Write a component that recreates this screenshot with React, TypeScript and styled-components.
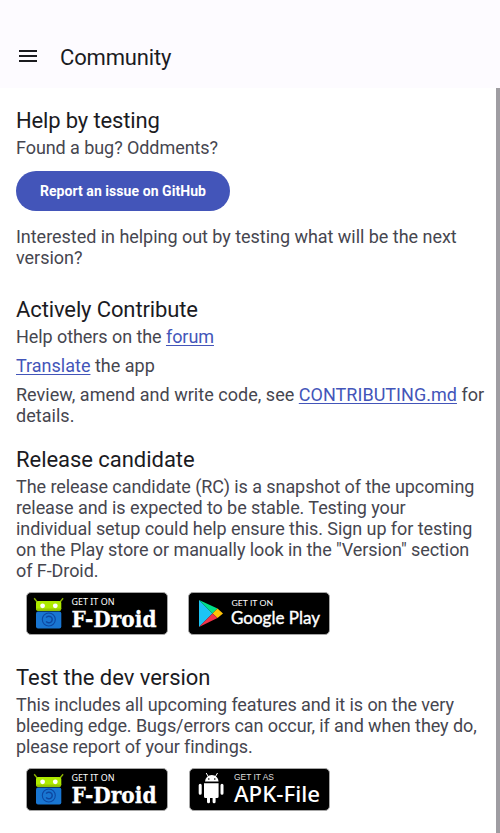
import React from 'react';
import styled, { createGlobalStyle } from 'styled-components';

const GlobalStyle = createGlobalStyle`
  * { box-sizing: border-box; }
  body { margin: 0; background: #fff; font-family: Roboto, sans-serif; }
`;

const Page = styled.div`
  display: flex;
  flex-direction: column;
  height: 833px;
  overflow: hidden;
`;

const TopBar = styled.header`
  display: flex;
  align-items: center;
  flex: 0 0 88px;
  padding: 27px 16px 0;
  gap: 20px;
  background: #fdfbff;
`;

const MenuButton = styled.button`
  display: flex;
  padding: 0 0 3px;
  border: 0;
  background: none;
`;

const Title = styled.h1`
  margin: 0;
  font-size: 22px;
  line-height: 26px;
  font-weight: 400;
  letter-spacing: -0.17px;
  color: #1b1b1f;
`;

const Body = styled.div`
  display: flex;
  flex: 1;
  min-height: 0;
`;

const Content = styled.main`
  flex: 1;
  min-width: 0;
  padding: 20px 0 0 16px;
`;

const Scrollbar = styled.div`
  flex: 0 0 4px;
  background: #9f9da2;
`;

const Section = styled.section<{ $gap?: number }>`
  margin-bottom: ${(p) => p.$gap ?? 0}px;
`;

const Heading = styled.h2<{ $tracking?: number }>`
  margin: 0 0 3px;
  font-size: 22px;
  line-height: 26px;
  font-weight: 400;
  letter-spacing: ${(p) => p.$tracking ?? -0.04}px;
  color: #1b1b1f;
`;

const Text = styled.p<{ $gap?: number; $tracking?: number }>`
  margin: 0 0 ${(p) => p.$gap ?? 0}px;
  font-size: 18px;
  line-height: 21px;
  font-weight: 400;
  letter-spacing: ${(p) => p.$tracking ?? -0.07}px;
  color: #46464f;
  white-space: nowrap;
`;

const Link = styled.a`
  color: #4355b9;
  text-decoration: underline;
  text-decoration-thickness: 1px;
  text-decoration-skip-ink: none;
  text-underline-offset: 2px;
`;

const PrimaryButton = styled.button`
  display: block;
  width: 214px;
  height: 40px;
  margin: 0 0 15px;
  padding: 0;
  border: 0;
  border-radius: 20px;
  background: #4355b9;
  color: #fff;
  font: 700 14px Roboto, sans-serif;
  letter-spacing: 0.06px;
`;

const Badges = styled.div`
  display: flex;
  gap: 20px;
  padding-left: 10px;
`;

const BadgeSvg = styled.svg`
  display: block;
  width: 142px;
  height: 43px;
`;

function Badge({ children, inset = 0 }: { children: React.ReactNode; inset?: number }) {
  return (
    <BadgeSvg viewBox="0 0 142 43">
      <rect x={0.5 + inset} y=".5" width={141 - inset} height="42" rx="4.5" fill="#000" stroke="#a6a6a6" />
      {children}
    </BadgeSvg>
  );
}

function FDroidBadge() {
  return (
    <Badge>
      <path d="M8.2 6.3l3.4 4.2M37.1 6.3l-3.4 4.2" stroke="#8ab000" strokeWidth="1.4" />
      <rect x="10" y="9" width="25.3" height="9.8" rx="2" fill="#aeea00" />
      <path d="M10 16.5h25.3v.3a2 2 0 0 1-2 2H12a2 2 0 0 1-2-2z" fill="#98c900" />
      <circle cx="16.6" cy="13.8" r="2.4" fill="#fff" />
      <circle cx="29.3" cy="13.8" r="2.4" fill="#fff" />
      <rect x="10" y="19.5" width="25.3" height="17" rx="2" fill="#1976d2" />
      <circle cx="22.8" cy="27.5" r="6.5" fill="none" stroke="#0d47a1" strokeWidth="1.1" />
      <path d="M20.2 25.6a3.3 3.3 0 1 1 0 3.8" fill="none" stroke="#0d47a1" strokeWidth="1.5" />
      <text x="45.5" y="12.7" fontSize="9" fontFamily="Noto Sans, sans-serif" fill="#fff" textLength="43" lengthAdjust="spacingAndGlyphs">GET IT ON</text>
      <text x="45.5" y="34.6" fontSize="23.2" fontWeight="700" fontFamily="DejaVu Serif, serif" fill="#fff" stroke="#fff" strokeWidth=".3" textLength="85" lengthAdjust="spacingAndGlyphs">F-Droid</text>
    </Badge>
  );
}

function GooglePlayBadge() {
  return (
    <Badge>
      <path d="M11 8v27l13.5-13.5z" fill="#1cc4f4" />
      <path d="M11 8l18.5 8.5-5 5z" fill="#00e08a" />
      <path d="M29.5 16.5l5.5 5-5.5 4.5-5-4.5z" fill="#ffc107" />
      <path d="M24.5 21.5l5 4.5L11 35z" fill="#f43249" />
      <text x="43.5" y="14" fontSize="8.3" fontFamily="Lato, sans-serif" fill="#fff" textLength="41.5" lengthAdjust="spacingAndGlyphs">GET IT ON</text>
      <text x="43" y="32.3" fontSize="18" fontFamily="Lato, sans-serif" fill="#fff" stroke="#fff" strokeWidth=".4" textLength="89" lengthAdjust="spacingAndGlyphs">Google Play</text>
    </Badge>
  );
}

function ApkBadge() {
  return (
    <Badge inset={1}>
      <path d="M18.2 5l2.3 4M29.5 5l-2.3 4" stroke="#fff" strokeWidth="1" />
      <path d="M17 13.6a6.8 6.6 0 0 1 13.6 0z" fill="#fff" />
      <circle cx="20.8" cy="11" r=".8" />
      <circle cx="26.8" cy="11" r=".8" />
      <path d="M16 15.2h14.6v13.4a1.5 1.5 0 0 1-1.5 1.5H17.5a1.5 1.5 0 0 1-1.5-1.5z" fill="#fff" />
      <path d="M12.2 17.3v8M34 17.3v8M20.5 29v4.8M26.1 29v4.8" stroke="#fff" strokeWidth="3" strokeLinecap="round" />
      <text x="46" y="12.4" fontSize="8.2" fontFamily="Liberation Sans, sans-serif" fill="#ddd" textLength="40" lengthAdjust="spacingAndGlyphs">GET IT AS</text>
      <text x="46" y="34.4" fontSize="22" fontWeight="500" fontFamily="Noto Sans, sans-serif" fill="#fff" textLength="86" lengthAdjust="spacingAndGlyphs">APK-File</text>
    </Badge>
  );
}

export default function App() {
  return (
    <Page>
      <GlobalStyle />
      <TopBar>
        <MenuButton aria-label="Menu">
          <svg width="24" height="24" viewBox="0 0 24 24">
            <path d="M3 6h18v2H3zM3 11h18v2H3zM3 16h18v2H3z" fill="#1b1b1f" />
          </svg>
        </MenuButton>
        <Title>Community</Title>
      </TopBar>
      <Body>
        <Content>
          <Section $gap={29}>
            <Heading $tracking={-0.15}>Help by testing</Heading>
            <Text $gap={13}>Found a bug? Oddments?</Text>
            <PrimaryButton>Report an issue on GitHub</PrimaryButton>
            <Text $tracking={-0.035}>Interested in helping out by testing what will be the next<br />version?</Text>
          </Section>
          <Section $gap={21}>
            <Heading $tracking={-0.12}>Actively Contribute</Heading>
            <Text $gap={8}>Help others on the <Link>forum</Link></Text>
            <Text $gap={8} $tracking={0}><Link>Translate</Link> the app</Text>
            <Text $tracking={0.03}>Review, amend and write code, see <Link>CONTRIBUTING.md</Link> for<br />details.</Text>
          </Section>
          <Section $gap={30}>
            <Heading>Release candidate</Heading>
            <Text $gap={11}>
              The release candidate (RC) is a snapshot of the upcoming<br />
              release and is expected to be stable. Testing your<br />
              individual setup could help ensure this. Sign up for testing<br />
              on the Play store or manually look in the "Version" section<br />
              of F-Droid.
            </Text>
            <Badges><FDroidBadge /><GooglePlayBadge /></Badges>
          </Section>
          <Section>
            <Heading>Test the dev version</Heading>
            <Text $gap={11} $tracking={-0.085}>
              This includes all upcoming features and it is on the very<br />
              bleeding edge. Bugs/errors can occur, if and when they do,<br />
              please report of your findings.
            </Text>
            <Badges><FDroidBadge /><ApkBadge /></Badges>
          </Section>
        </Content>
        <Scrollbar />
      </Body>
    </Page>
  );
}
